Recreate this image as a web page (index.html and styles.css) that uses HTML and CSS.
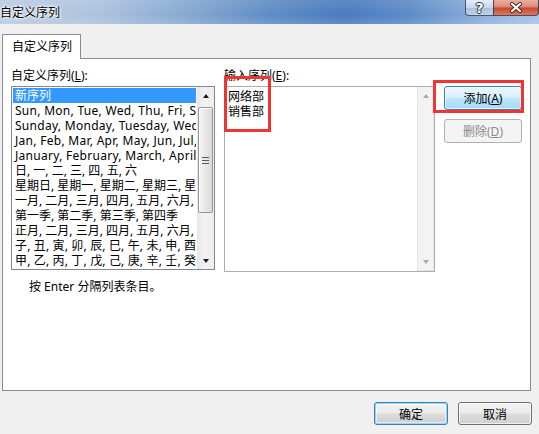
FILE: index.html
```html
<!DOCTYPE html>
<html lang="zh-CN">
<head>
<meta charset="utf-8">
<title>自定义序列</title>
<link rel="stylesheet" href="styles.css">
</head>
<body>
<div class="window">
  <header class="titlebar">
    <span class="title">自定义序列</span>
    <div class="caption">
      <span class="cap-btn help">?</span>
      <span class="cap-btn close">
        <svg width="14" height="11" viewBox="0 0 14 11">
          <path d="M3 2 L11 9 M11 2 L3 9" stroke="#4a2320" stroke-width="4" stroke-linecap="round" fill="none"/>
          <path d="M3 2 L11 9 M11 2 L3 9" stroke="#ffffff" stroke-width="2.2" stroke-linecap="round" fill="none"/>
        </svg>
      </span>
    </div>
  </header>
  <main class="content">
    <div class="tabs"><div class="tab">自定义序列</div></div>
    <section class="panel">
      <div class="cols">
        <div class="col">
          <div class="label">自定义序列(<u>L</u>):</div>
          <div class="listbox">
            <ul class="items">
              <li class="sel">新序列</li>
              <li class="lat">Sun, Mon, Tue, Wed, Thu, Fri, Sat</li>
              <li class="lat">Sunday, Monday, Tuesday, Wednesday, Thursday</li>
              <li class="lat">Jan, Feb, Mar, Apr, May, Jun, Jul, Aug</li>
              <li class="lat">January, February, March, April, May</li>
              <li>日, 一, 二, 三, 四, 五, 六</li>
              <li>星期日, 星期一, 星期二, 星期三, 星期四</li>
              <li>一月, 二月, 三月, 四月, 五月, 六月, 七月</li>
              <li>第一季, 第二季, 第三季, 第四季</li>
              <li>正月, 二月, 三月, 四月, 五月, 六月, 七月</li>
              <li class="cjk">子, 丑, 寅, 卯, 辰, 巳, 午, 未, 申, 酉, 戌, 亥</li>
              <li class="cjk">甲, 乙, 丙, 丁, 戊, 己, 庚, 辛, 壬, 癸</li>
            </ul>
            <div class="sb">
              <div class="sb-btn"><span class="arrow-up"></span></div>
              <div class="sb-track">
                <div class="sb-thumb"><span class="grip"></span></div>
              </div>
              <div class="sb-btn"><span class="arrow-down"></span></div>
            </div>
          </div>
        </div>
        <div class="col">
          <div class="label">输入序列(<u>E</u>):</div>
          <div class="textbox">
            <div class="lines">
              <div>网络部</div>
              <div>销售部</div>
            </div>
            <div class="sb sb-off">
              <div class="sb-btn"><span class="arrow-up"></span></div>
              <div class="sb-track"></div>
              <div class="sb-btn"><span class="arrow-down"></span></div>
            </div>
          </div>
        </div>
        <div class="col col-btns">
          <button class="btn hot">添加(<u>A</u>)</button>
          <button class="btn off">删除(<u>D</u>)</button>
        </div>
      </div>
      <p class="hint">按 Enter 分隔列表条目。</p>
      <div class="mark mark-input"></div>
      <div class="mark mark-add"></div>
    </section>
    <footer class="footer">
      <button class="btn default">确定</button>
      <button class="btn">取消</button>
    </footer>
  </main>
</div>
</body>
</html>
```

FILE: styles.css
```css
* { box-sizing: border-box; }
html, body { margin: 0; padding: 0; }
body {
  width: 539px;
  height: 434px;
  overflow: hidden;
  background: #f0f0f0;
  font-family: "Noto Sans", "Noto Sans CJK SC", sans-serif;
  font-size: 12px;
  color: #000;
}
.window { height: 434px; display: flex; flex-direction: column; }

/* title bar */
.titlebar {
  height: 24px;
  flex: none;
  display: flex;
  align-items: flex-start;
  background:
    linear-gradient(rgba(255,255,255,0.10), rgba(255,255,255,0) 60%, rgba(255,255,255,0.12)),
    linear-gradient(90deg, #b9cce2 0%, #adc3de 18%, #88a9d2 34%, #5f8cc5 50%, #4a7bbf 64%, #5d8bc8 76%, #8eb0dc 90%, #a7c3e6 100%);
}
.title {
  line-height: 23px;
  font-family: "Noto Sans CJK SC", sans-serif;
  text-shadow: 0 0 5px #fff, 0 0 3px #fff, 0 0 2px #fff;
}
.caption { margin-left: auto; display: flex; }
.cap-btn {
  height: 16px;
  display: flex;
  align-items: center;
  justify-content: center;
  border: 1px solid rgba(35, 50, 75, 0.8);
  border-top: none;
}
.help {
  width: 28px;
  border-right: none;
  border-radius: 0 0 0 4px;
  background: linear-gradient(#e6edf6, #c9d8ea 50%, #a9bfda 51%, #c0d3ea);
  color: #fff;
  font-family: "DejaVu Sans", sans-serif;
  font-weight: bold;
  font-size: 14px;
  text-shadow: 0 0 1px #2a3a55, 1px 0 0 #2a3a55, -1px 0 0 #2a3a55, 0 1px 0 #2a3a55, 0 -1px 0 #2a3a55;
}
.close {
  width: 46px;
  border-radius: 0 0 4px 0;
  background: linear-gradient(#eab0a3, #dc8775 48%, #c74530 52%, #d77a5f);
}

/* content */
.content { flex: 1; display: flex; flex-direction: column; padding: 10px 0 0 2px; }
.tabs { height: 24px; display: flex; flex: none; }
.tab {
  width: 79px;
  height: 25px;
  border: 1px solid #898c95;
  border-bottom: none;
  background: #fff;
  padding-left: 9px;
  line-height: 24px;
  position: relative;
  z-index: 1;
}
.panel {
  width: 529px;
  height: 333px;
  flex: none;
  border: 1px solid #898c95;
  background: #fff;
  position: relative;
  padding: 9px 0 0 8px;
}
.cols { display: flex; gap: 9px; }
.col { display: flex; flex-direction: column; }
.label { height: 18px; line-height: 16px; }
.label u, .btn u { text-decoration-thickness: 1px; text-underline-offset: 1px; }

/* list box */
.listbox {
  width: 204px;
  height: 184px;
  border: 1px solid #828790;
  display: flex;
}
.items {
  list-style: none;
  margin: 0;
  padding: 1px 1px 0;
  flex: 1;
  min-width: 0;
  overflow: hidden;
}
.items li {
  height: 15px;
  line-height: 15px;
  padding-left: 2px;
  white-space: nowrap;
  overflow: hidden;
}
.items li.lat { letter-spacing: 0.28px; }
.items li.cjk { letter-spacing: 0.15px; }
.items li.sel { background: #3399ff; color: #fff; }

/* scrollbars */
.sb {
  width: 17px;
  flex: none;
  display: flex;
  flex-direction: column;
  background: linear-gradient(90deg, #e6e6e6, #f2f2f2 40%, #eeeeee);
}
.sb-btn { height: 17px; flex: none; display: flex; align-items: center; justify-content: center; }
.arrow-up, .arrow-down {
  width: 0;
  height: 0;
  border-left: 3.5px solid transparent;
  border-right: 3.5px solid transparent;
}
.arrow-up { border-bottom: 4px solid #1a1a1a; }
.arrow-down { border-top: 4px solid #1a1a1a; }
.sb-track { flex: 1; padding: 3px 1px 0; }
.sb-thumb {
  height: 106px;
  border: 1px solid #979797;
  border-radius: 2px;
  background: linear-gradient(90deg, #f5f5f5, #e9e9e9 45%, #d9d9d9);
  box-shadow: inset 1px 1px 0 #fff;
  display: flex;
  align-items: center;
  justify-content: center;
}
.grip {
  width: 7px;
  height: 7px;
  background: repeating-linear-gradient(#5a5a5a 0 1px, transparent 1px 3px);
}
.sb-off {
  background: #f3f3f3;
  border-left: 1px solid #e4e4e4;
  border-right: 1px solid #e9e9e9;
  border-bottom: 1px solid #e4e4e4;
}
.sb-off .arrow-up { border-bottom-color: #a8a8a8; }
.sb-off .arrow-down { border-top-color: #a8a8a8; }

/* text box */
.textbox {
  width: 211px;
  height: 186px;
  border: 1px solid #abadb3;
  display: flex;
}
.lines { flex: 1; padding: 2px 0 0 3px; line-height: 15px; }

/* buttons */
.col-btns { padding-top: 18px; gap: 9px; }
.btn {
  font: inherit;
  width: 78px;
  height: 24px;
  padding: 0;
  color: #000;
  border: 1px solid #707070;
  border-radius: 3px;
  background: linear-gradient(#f2f2f2 0%, #ebebeb 48%, #dddddd 52%, #cfcfcf 100%);
  box-shadow: inset 0 0 0 1px rgba(255,255,255,0.7);
}
.btn.hot {
  border-color: #3c7fb1;
  background: linear-gradient(#eaf6fd 0%, #d9f0fc 48%, #bee6fd 52%, #a7d9f5 100%);
}
.btn.off {
  border-color: #adb2b5;
  background: #f4f4f4;
  color: #8a8a8a;
  box-shadow: none;
}
.btn.default {
  border-color: #3c7fb1;
  box-shadow: inset 0 0 0 1px #8fd8fb, inset 0 0 0 2px rgba(255,255,255,0.5);
}

.hint { margin: 7px 0 0 18px; line-height: 16px; }

/* annotation boxes */
.mark { position: absolute; border: 3px solid #ef3434; }
.mark-input { left: 221px; top: 17px; width: 47px; height: 56px; }
.mark-add { left: 430px; top: 21px; width: 91px; height: 33px; }

/* footer */
.footer { display: flex; justify-content: flex-end; gap: 10px; padding: 11px 7px 0 0; }
.footer .btn { width: 74px; height: 23px; }
```
